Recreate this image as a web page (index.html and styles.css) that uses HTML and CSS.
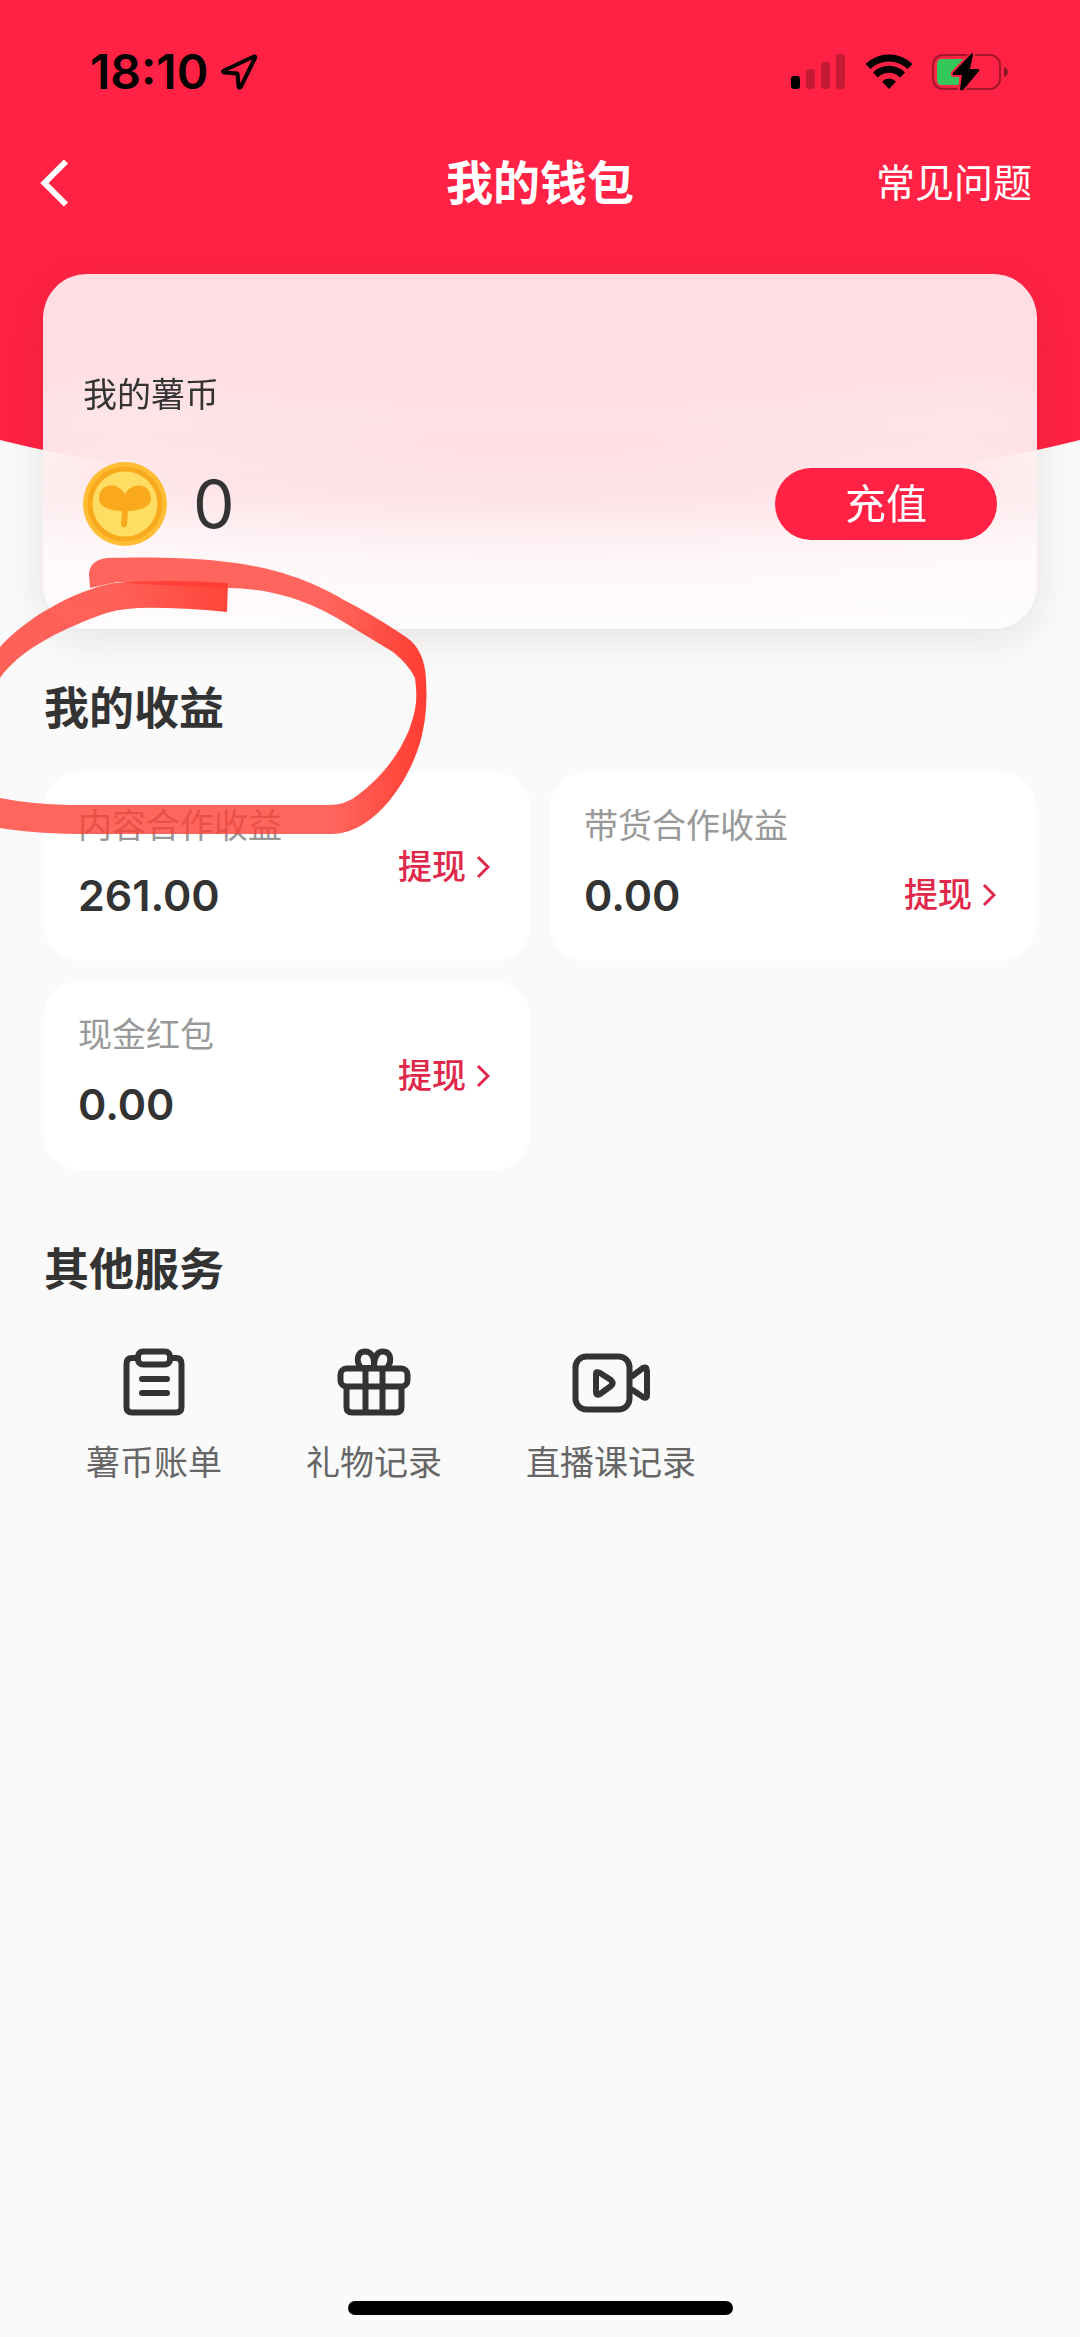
FILE: index.html
```html
<!DOCTYPE html>
<html lang="zh-CN">
<head>
<meta charset="utf-8">
<meta name="viewport" content="width=device-width, initial-scale=1">
<title>我的钱包</title>
<link rel="stylesheet" href="styles.css">
</head>
<body>
<div class="page">
  <header class="hero">
    <div class="status">
      <div class="status-left">
        <span class="time">18:10</span>
        <svg class="location" viewBox="0 0 38 38" width="38" height="38" aria-hidden="true"><path d="M34 3.500 L4 17.500 Q2 19 4.500 19.500 L17.500 20.500 L18.500 33.500 Q19.500 36 21 33.500 L35 5 Q35.500 3 34 3.500Z" fill="none" stroke="#000" stroke-width="4" stroke-linejoin="round"/></svg>
      </div>
      <div class="status-right">
        <svg viewBox="0 0 56 38" width="56" height="38" aria-hidden="true"><rect x="0" y="23" width="9" height="13" rx="3"/><g opacity=".22"><rect x="15" y="16" width="9" height="20" rx="3"/><rect x="30" y="9" width="9" height="27" rx="3"/><rect x="45" y="1" width="9" height="35" rx="3"/></g></svg>
        <svg viewBox="0 0 48 38" width="48" height="38" aria-hidden="true"><g fill="none" stroke="#000" stroke-width="7"><path d="M3 13.500 A30 30 0 0 1 45 13.500"/><path d="M10.500 22 A19 19 0 0 1 37.500 22"/></g><path d="M24 36 L17 28.500 Q24 22.500 31 28.500Z"/></svg>
        <svg viewBox="0 0 78 38" width="78" height="38" aria-hidden="true"><rect x="2" y="2" width="67" height="34" rx="10" fill="none" stroke="#000" stroke-opacity=".36" stroke-width="2"/><path d="M73 14 Q77 16 77 19 Q77 22 73 24Z" fill-opacity=".45"/><path d="M11 6 H32 L26 20 L31 32 H11 Q6 32 6 27 V11 Q6 6 11 6Z" fill="#34c759"/><path d="M41 0 L22 20 Q21 22 23 22 H31 L29 36 Q30 39 33 36 L48 18 Q49 16 47 16 H39 L42 2 Q42 0 41 0Z" fill="#000" stroke="#ff2244" stroke-width="4" paint-order="stroke"/></svg>
      </div>
    </div>
    <nav class="nav">
      <button class="back" type="button" aria-label="返回"><svg viewBox="0 0 30 50" width="30" height="50" aria-hidden="true"><path d="M26 3.500 L4.500 25 L26 46.500" fill="none" stroke="#fff" stroke-width="6"/></svg></button>
      <h1 class="title">我的钱包</h1>
      <a class="faq" href="#faq">常见问题</a>
    </nav>
    <section class="coins">
      <h2 class="coins-label">我的薯币</h2>
      <div class="coins-row">
        <svg viewBox="0 0 84 84" width="84" height="84" aria-hidden="true"><circle cx="42" cy="42" r="42" fill="#ffbd33"/><circle cx="42" cy="42" r="35" fill="#ffdd62" stroke="#f9aa1c" stroke-width="5"/><path d="M42 32 C38 25 32 23.500 28 23.500 C21 23.500 16 29 16 36 C16 46 28 48.500 39 49 L38 63 Q41 68 44 63 L45 49 C56 48.500 68 46 68 36 C68 29 63 23.500 56 23.500 C52 23.500 46 25 42 32Z" fill="#f9a91b"/></svg>
        <span class="coins-value">0</span>
        <button class="recharge" type="button">充值</button>
      </div>
    </section>
  </header>

  <main class="content">
    <section>
      <h2 class="section-title">我的收益</h2>
      <div class="incomes">
        <article class="income">
          <div class="income-info"><h3 class="income-label">内容合作收益</h3><p class="income-value">261.00</p></div>
          <a class="withdraw" href="#content">提现<svg viewBox="0 0 14 24" width="14" height="24" aria-hidden="true"><path d="M2 2 L12 12 L2 22"/></svg></a>
        </article>
        <article class="income">
          <div class="income-info"><h3 class="income-label">带货合作收益</h3><p class="income-value">0.00</p></div>
          <a class="withdraw withdraw-low" href="#goods">提现<svg viewBox="0 0 14 24" width="14" height="24" aria-hidden="true"><path d="M2 2 L12 12 L2 22"/></svg></a>
        </article>
        <article class="income">
          <div class="income-info"><h3 class="income-label">现金红包</h3><p class="income-value">0.00</p></div>
          <a class="withdraw" href="#cash">提现<svg viewBox="0 0 14 24" width="14" height="24" aria-hidden="true"><path d="M2 2 L12 12 L2 22"/></svg></a>
        </article>
      </div>
    </section>

    <section class="services-section">
      <h2 class="section-title">其他服务</h2>
      <div class="services">
        <a class="service" href="#bills"><svg viewBox="0 0 80 80" width="80" height="80" aria-hidden="true"><path d="M24 15 H18 Q12.500 15 12.500 21 V64 Q12.500 69.500 18 69.500 H62 Q67.500 69.500 67.500 64 V21 Q67.500 15 62 15 H56"/><rect x="24" y="8.500" width="32" height="13" rx="5"/><path d="M28 36 H53 M28 50 H53" stroke-linecap="round"/></svg><span>薯币账单</span></a>
        <a class="service" href="#gifts"><svg viewBox="0 0 80 80" width="80" height="80" aria-hidden="true"><rect x="6.500" y="25.500" width="67" height="18" rx="6"/><path d="M12.500 44 V64 Q12.500 69.500 18 69.500 H62 Q67.500 69.500 67.500 64 V44 M31.500 26 V69 M48.500 26 V69"/><path d="M40 25 H27 C21 17 24 8.500 31 8.500 C37 8.500 40 14 40 20 V25 C40 14 43 8.500 49 8.500 C56 8.500 59 17 53 25"/></svg><span>礼物记录</span></a>
        <a class="service" href="#lives"><svg viewBox="0 0 80 80" width="80" height="80" aria-hidden="true"><rect x="4.500" y="13.500" width="54" height="53" rx="11"/><path d="M60 34 L72 25 Q76 23 76 28 V52 Q76 56 72 54 L60 46"/><path d="M25 31 V49 Q25 53 29 51 L40 43 Q43 40 40 37 L29 30 Q25 28 25 31Z"/></svg><span>直播课记录</span></a>
      </div>
    </section>
  </main>
  <div class="home-bar"></div>

  <svg class="marker" viewBox="0 0 430 840" width="430" height="840" aria-hidden="true">
    <defs>
      <linearGradient id="loop" gradientUnits="userSpaceOnUse" x1="330" y1="0" x2="422" y2="0"><stop offset="0" stop-color="#ff3b30" stop-opacity=".78"/><stop offset="1" stop-color="#ff3b30" stop-opacity=".98"/></linearGradient>
      <linearGradient id="tail" gradientUnits="userSpaceOnUse" x1="110" y1="0" x2="228" y2="0"><stop offset="0" stop-color="#ff3b30" stop-opacity=".8"/><stop offset="1" stop-color="#ff3b30" stop-opacity=".95"/></linearGradient>
    </defs>
    <path fill="url(#loop)" d="M89 574 Q90 560 107 558 C140 557 188 557 227 562 C273 567 310 580 344 600 C367 612 387 624 406 637 Q425 650 426 680 Q428 710 422 735 C415 765 396 799 372 818 Q352 834 331 834 H75 Q30 833 0 828 V798 Q30 804 70 805 H324 Q345 806 358 795 C384 775 399 754 409 730 C418 706 417 695 415 678 Q409 665 393 652 L337 618 C302 598 270 589 229 588 C190 586 145 585 117 582 L90 588Z"/>
    <path fill="url(#tail)" d="M0 647 C26 618 73 591 114 583 Q168 579 228 583 L227 612 Q175 607 138 608 Q115 609 98 616 C58 631 20 650 0 678Z"/>
  </svg>
</div>
</body>
</html>
```
FILE: styles.css
```css
* { box-sizing: border-box; }

body {
  margin: 0;
  background: #fafafa;
  color: #333;
  font-family: Inter, "Noto Sans CJK SC", sans-serif;
  font-size: 34px;
}

h1, h2, h3, p { margin: 0; }
a { color: inherit; text-decoration: none; }
button { border: 0; padding: 0; font: inherit; cursor: pointer; }
svg { display: block; flex: none; }

.page {
  position: relative;
  display: flex;
  flex-direction: column;
  min-height: 100vh;
}

.hero {
  position: relative;
  overflow: hidden;
  padding-bottom: 50px;
}

/* red backdrop with a shallow curved lower edge */
.hero::before {
  content: "";
  position: absolute;
  top: 0;
  left: -25%;
  width: 150%;
  height: 497px;
  border-radius: 0 0 50% 50% / 0 0 224px 224px;
  background: #ff2244;
}

.status, .nav, .coins { position: relative; }

.status {
  display: flex;
  justify-content: space-between;
  align-items: center;
  height: 144px;
  padding: 0 71px 0 90px;
}

.status-left { display: flex; align-items: center; gap: 12px; }
.status-right { display: flex; align-items: center; gap: 18px; }
.time { color: #000; font-size: 48px; font-weight: 600; line-height: 60px; }

.nav {
  display: grid;
  grid-template-columns: 1fr auto 1fr;
  align-items: center;
  height: 78px;
  padding: 0 40px;
  color: #fff;
}

.back { justify-self: start; background: none; }
.title { font-size: 47px; font-weight: 700; line-height: 60px; }
.faq { justify-self: end; padding-right: 8px; font-size: 39px; line-height: 60px; }

.coins {
  margin: 52px 43px 0;
  padding: 101px 40px 83px;
  border-radius: 44px;
  background:
    linear-gradient(rgba(255, 34, 68, 0) 40%, rgba(255, 34, 68, .06) 62%, rgba(255, 34, 68, .02) 80%, rgba(255, 34, 68, .01)),
    rgba(254, 254, 254, .86);
  backdrop-filter: blur(56px);
  box-shadow: 0 10px 40px rgba(60, 30, 20, .1);
}

.coins-label { font-size: 34px; font-weight: 400; line-height: 40px; }
.coins-row { display: flex; align-items: center; margin-top: 47px; }
.coins-value { margin-left: 26px; font-size: 66px; line-height: 84px; }

.recharge {
  width: 222px;
  height: 72px;
  margin-left: auto;
  border-radius: 36px;
  background: #ff2244;
  color: #fff;
  font-size: 41px;
  line-height: 72px;
}

.content { padding: 0 44px; }
.section-title { font-size: 45px; font-weight: 700; line-height: 60px; }

.incomes {
  display: grid;
  grid-template-columns: 1fr 1fr;
  gap: 20px;
  margin-top: 33px;
}

.income {
  display: flex;
  justify-content: space-between;
  align-items: center;
  padding: 36px 40px 36px 34px;
  border-radius: 36px;
  background: #fff;
}

.income-label { color: #999; font-size: 34px; font-weight: 400; line-height: 36px; }
.income-value { margin-top: 21px; font-size: 43px; font-weight: 600; line-height: 60px; }

.withdraw {
  display: flex;
  align-items: center;
  gap: 10px;
  color: #e0284a;
  font-weight: 500;
  line-height: 60px;
}

.withdraw-low { align-self: flex-end; }
.withdraw path { fill: none; stroke: currentColor; stroke-width: 3; }

.services-section { margin-top: 70px; }

.services {
  display: flex;
  gap: 84px;
  margin-top: 43px;
  padding-left: 42px;
}

.service {
  display: flex;
  flex-direction: column;
  align-items: center;
  gap: 20px;
  color: #666;
  line-height: 40px;
}

.service svg {
  fill: none;
  stroke: #333;
  stroke-width: 6;
  stroke-linejoin: round;
}

.home-bar {
  width: 385px;
  height: 14px;
  margin: auto auto 22px;
  border-radius: 7px;
  background: #000;
}

/* hand-drawn marker loop lying over the page */
.marker {
  position: absolute;
  top: 0;
  left: 0;
  pointer-events: none;
}
```
